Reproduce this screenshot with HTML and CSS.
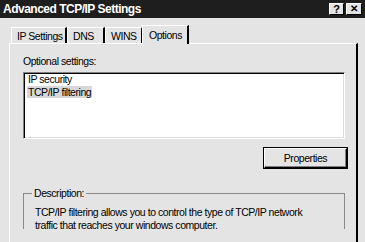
FILE: index.html
```html
<!DOCTYPE html>
<html lang="en">
<head>
    <meta charset="UTF-8">
    <title>Advanced TCP/IP Settings</title>
    <link rel="stylesheet" href="styles.css">
</head>
<body>
    <div class="titlebar">
        <span class="title">Advanced TCP/IP Settings</span>
        <div class="title-buttons">
            <span class="cap-btn">?</span>
            <span class="cap-btn close">&#x2715;</span>
        </div>
    </div>

    <div class="dialog">
        <div class="tabs">
            <div class="tab tab-ip">IP Settings</div>
            <div class="tab tab-dns">DNS</div>
            <div class="tab tab-wins">WINS</div>
            <div class="tab tab-options active">Options</div>
        </div>

        <div class="panel">
            <div class="label">Optional settings:</div>
            <div class="listbox">
                <div class="item">IP security</div>
                <div class="item selected">TCP/IP filtering</div>
            </div>

            <div class="button-row">
                <button class="btn">Properties</button>
            </div>

            <fieldset class="group">
                <legend>Description:</legend>
                <p>TCP/IP filtering allows you to control the type of TCP/IP network traffic that reaches your windows computer.</p>
            </fieldset>
        </div>
    </div>
</body>
</html>
```

FILE: styles.css
```css
body {
    margin: 0;
    background: #e4e4e4;
    font-family: "Liberation Sans", Arial, sans-serif;
    font-size: 10.5px;
    letter-spacing: -0.45px;
    color: #000;
    height: 242px;
    overflow: hidden;
}

/* Title bar */
.titlebar {
    height: 18px;
    background: #1e1e1e;
    display: flex;
    align-items: center;
    justify-content: space-between;
    padding: 0 3px 0 3px;
}

.title {
    color: #fff;
    font-weight: bold;
    font-size: 12px;
    letter-spacing: -0.5px;
}

.title-buttons {
    display: flex;
    gap: 2px;
}

.cap-btn {
    width: 15px;
    height: 12px;
    background: #e4e4e4;
    border-top: 1px solid #fff;
    border-left: 1px solid #fff;
    border-right: 1px solid #000;
    border-bottom: 1px solid #000;
    box-sizing: border-box;
    display: flex;
    align-items: center;
    justify-content: center;
    font-weight: bold;
    font-size: 11px;
    letter-spacing: 0;
    line-height: 1;
}

.cap-btn.close {
    width: 16px;
    font-size: 10px;
}

/* Tabs */
.dialog {
    padding: 7px 7px 0 9px;
}

.tabs {
    display: flex;
    align-items: flex-end;
    padding-left: 2px;
    height: 18px;
    position: relative;
    z-index: 1;
}

.tab {
    height: 16px;
    box-sizing: border-box;
    border-top: 1px solid #fff;
    border-left: 1px solid #fff;
    border-right: 2px solid #000;
    padding: 2px 0 0 5px;
    line-height: 12px;
}

.tab-ip { width: 56px; }
.tab-dns { width: 38px; }
.tab-wins { width: 38px; }

.tab-options {
    width: 47px;
    height: 19px;
    margin-left: -1px;
    margin-bottom: -1px;
    padding-top: 3px;
    padding-left: 6px;
    background: #e4e4e4;
}

/* Panel */
.panel {
    height: 198px;
    overflow: hidden;
    border-top: 1px solid #fff;
    border-left: 1px solid #fff;
    border-right: 2px solid #000;
    padding: 11px 11px 0 13px;
}

.label {
    line-height: 12px;
    margin-bottom: 5px;
}

.listbox {
    height: 67px;
    box-sizing: border-box;
    background: #fff;
    border-top: 1px solid #808080;
    border-left: 1px solid #808080;
    border-right: 1px solid #fff;
    border-bottom: 1px solid #fff;
    box-shadow: inset 1px 1px 0 #000, inset -1px -1px 0 #dcdcdc;
    padding: 0 0 0 3px;
}

.item {
    line-height: 12px;
    padding: 0 1px;
}

.item.selected {
    display: inline-block;
    background: #d8d8d8;
    margin-top: 1px;
}

/* Properties button */
.button-row {
    display: flex;
    justify-content: flex-end;
    margin: 9px -2px 0 0;
}

.btn {
    width: 83px;
    height: 20px;
    background: #e4e4e4;
    font: inherit;
    letter-spacing: inherit;
    color: #000;
    border-top: 1px solid #fff;
    border-left: 1px solid #fff;
    border-right: 1px solid #000;
    border-bottom: 1px solid #000;
    box-shadow: 0 0 0 1px #000, inset -1px -1px 0 #808080;
    padding: 0;
}

/* Description group */
.group {
    margin: 19px 0 0 0;
    border: 1px solid #8a8a8a;
    border-bottom: none;
    padding: 1px 0 0 11px;
    height: 40px;
}

.group legend {
    padding: 0 2px;
    margin-left: -3px;
    line-height: 12px;
}

.group p {
    margin: 6px 0 0 0;
    line-height: 13px;
    width: 292px;
}
```
